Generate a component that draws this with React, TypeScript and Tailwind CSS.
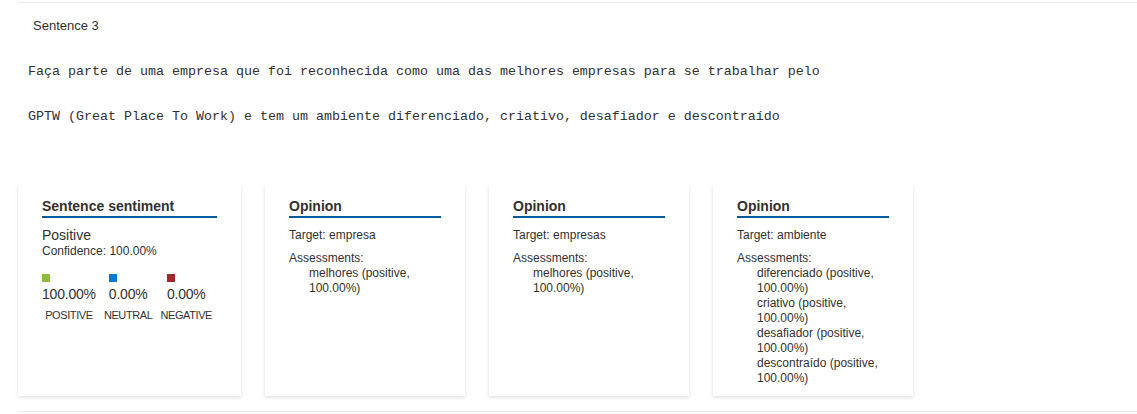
import React from "react";

const sans = "font-['Segoe_UI','Liberation_Sans',sans-serif]";
const mono = "font-['Consolas','Liberation_Mono',monospace]";

const cardClass =
  "bg-white px-6 pt-[13px] pb-[10px] shadow-[0_1.6px_3.6px_rgba(0,0,0,0.13),0_0.3px_0.9px_rgba(0,0,0,0.11)]";

const headingClass =
  "border-b-2 border-[#005a9e] pb-[1px] text-[14px] font-semibold leading-[18px] text-[#323130]";

interface Opinion {
  target: string;
  assessments: string[];
}

const opinions: Opinion[] = [
  { target: "empresa", assessments: ["melhores"] },
  { target: "empresas", assessments: ["melhores"] },
  {
    target: "ambiente",
    assessments: ["diferenciado", "criativo", "desafiador", "descontraído"],
  },
];

const scores = [
  { label: "POSITIVE", value: "100.00%", color: "bg-[#8cbd3a]" },
  { label: "NEUTRAL", value: "0.00%", color: "bg-[#0078d4]" },
  { label: "NEGATIVE", value: "0.00%", color: "bg-[#a4262c]" },
];

function SentimentCard() {
  return (
    <div className={`${cardClass} w-[223px]`}>
      <h3 className={headingClass}>Sentence sentiment</h3>
      <div className="mt-[8px] text-[14px] leading-[18px] text-[#323130]">
        Positive
      </div>
      <div className="text-[12px] leading-[15px] text-[#323130]">
        Confidence: 100.00%
      </div>
      <div className="mt-[15px] flex gap-2">
        {scores.map((s) => (
          <div key={s.label} className="flex flex-col items-center">
            <div>
              <div className={`h-2 w-2 ${s.color}`} />
              <div className="mt-[3px] text-[14px] leading-[18px] tracking-[-0.2px] text-[#323130]">
                {s.value}
              </div>
            </div>
            <div className="mt-[5px] text-[11px] leading-[15px] tracking-[-0.4px] text-[#323130]">
              {s.label}
            </div>
          </div>
        ))}
      </div>
    </div>
  );
}

function OpinionCard({ opinion }: { opinion: Opinion }) {
  return (
    <div className={`${cardClass} w-[200px]`}>
      <h3 className={headingClass}>Opinion</h3>
      <div className="mt-[10px] text-[12px] leading-[15px] text-[#323130]">
        Target: {opinion.target}
      </div>
      <div className="mt-2 text-[12px] leading-[15px] text-[#323130]">
        Assessments:
        {opinion.assessments.map((a) => (
          <div key={a} className="pl-5">
            {a} (positive, 100.00%)
          </div>
        ))}
      </div>
    </div>
  );
}

export default function App() {
  return (
    <div className={`${sans} bg-white pt-[2px]`}>
      <section className="ml-[18px] border-y border-[#edebe9]">
        <div className="ml-[15px] mt-[14px] text-[13px] leading-[18px] text-[#323130]">
          Sentence 3
        </div>
        <p className={`${mono} ml-[10px] mt-[28px] text-[13.33px] leading-[18px] text-[#323130]`}>
          Faça parte de uma empresa que foi reconhecida como uma das melhores
          empresas para se trabalhar pelo
        </p>
        <p className={`${mono} ml-[10px] mt-[27px] text-[13.33px] leading-[18px] text-[#323130]`}>
          GPTW (Great Place To Work) e tem um ambiente diferenciado, criativo,
          desafiador e descontraído
        </p>
        <div className="mt-[58px] mb-[15px] flex gap-6">
          <SentimentCard />
          {opinions.map((o) => (
            <OpinionCard key={o.target} opinion={o} />
          ))}
        </div>
      </section>
    </div>
  );
}
